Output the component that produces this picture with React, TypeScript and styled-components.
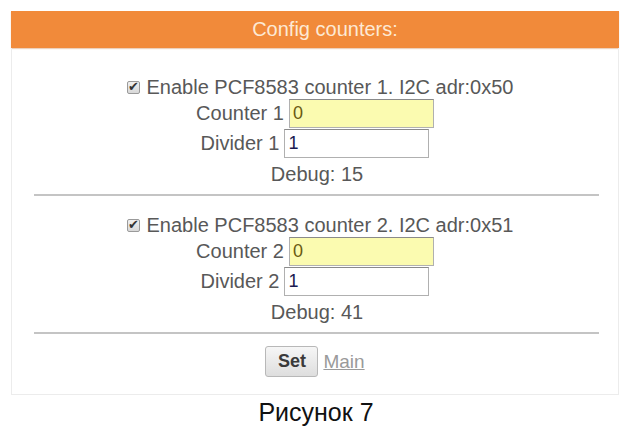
import React from "react";
import styled, { createGlobalStyle } from "styled-components";

const Global = createGlobalStyle`
  html, body { margin: 0; padding: 0; background: #ffffff; }
  body { font-family: "Liberation Sans", Arial, sans-serif; }
`;

const Page = styled.div`
  padding: 11px 20px 0 11px;
  width: 608px;
`;

const Header = styled.div`
  height: 37px;
  background: #f18a3a;
  color: #fde9d4;
  font-size: 20px;
  display: flex;
  align-items: center;
  justify-content: center;
  padding-left: 20px;
  box-shadow: 0 1px 1px rgba(200, 120, 60, 0.35);
`;

const Panel = styled.div`
  border: 1px solid #ececec;
  border-top: none;
  padding: 27px 0 17px;
  display: flex;
  flex-direction: column;
  align-items: center;
`;

const Block = styled.div<{ $first?: boolean }>`
  display: flex;
  flex-direction: column;
  align-items: center;
  width: 100%;
  padding-top: ${(p) => (p.$first ? 0 : 17)}px;
`;

const EnableLine = styled.label`
  display: flex;
  align-items: center;
  height: 24px;
  font-size: 20px;
  color: #585858;
  padding-left: 10px;
`;

const Check = styled.input`
  appearance: none;
  width: 13px;
  height: 13px;
  margin: 0 7px 0 0;
  border: 1px solid #9a9a9a;
  border-radius: 2px;
  background: linear-gradient(#f0f0f0, #d8d8d8);
  position: relative;
  &:checked::after {
    content: "✔";
    position: absolute;
    left: 0px;
    top: -3px;
    font-size: 13px;
    color: #333;
  }
`;

const FieldRow = styled.div<{ $gap?: number }>`
  display: flex;
  align-items: center;
  gap: 5px;
  margin-top: ${(p) => p.$gap ?? 0}px;
`;

const FieldLabel = styled.span`
  font-size: 20px;
  color: #585858;
`;

const Field = styled.input<{ $hl?: boolean }>`
  width: 145px;
  height: 29px;
  box-sizing: border-box;
  border: 1px solid #b0b0b0;
  border-top-color: #8a8a8a;
  background: ${(p) => (p.$hl ? "#fbfbb0" : "#ffffff")};
  color: ${(p) => (p.$hl ? "#6a5a10" : "#1a1a50")};
  font-family: "Liberation Sans", Arial, sans-serif;
  font-size: 18px;
  padding: 0 3px;
  outline: none;
`;

const Debug = styled.div`
  height: 24px;
  line-height: 24px;
  margin-top: 4px;
  font-size: 20px;
  color: #585858;
  padding-left: 4px;
`;

const Rule = styled.hr`
  align-self: stretch;
  margin: 8px 19px 0 22px;
  border: none;
  height: 2px;
  background: #c4c4c4;
`;

const Actions = styled.div`
  display: flex;
  align-items: center;
  gap: 5px;
  margin-top: 12px;
`;

const SetButton = styled.button`
  width: 53px;
  height: 31px;
  border: 1px solid #b8b8b8;
  border-radius: 3px;
  background: linear-gradient(#f6f6f6, #dedede);
  font-family: "Liberation Sans", Arial, sans-serif;
  font-weight: bold;
  font-size: 18px;
  color: #3a3a3a;
  padding: 0;
`;

const MainLink = styled.a`
  font-size: 19px;
  color: #9a9a9a;
  text-decoration: underline;
`;

const Caption = styled.div`
  text-align: center;
  font-size: 25px;
  color: #111;
  margin-top: 3px;
  padding-left: 2px;
`;

const counters = [
  { n: 1, adr: "0x50", counter: "0", divider: "1", debug: 15 },
  { n: 2, adr: "0x51", counter: "0", divider: "1", debug: 41 },
];

export default function App() {
  return (
    <>
      <Global />
      <Page>
        <Header>Config counters:</Header>
        <Panel>
          {counters.map((c, i) => (
            <Block key={c.n} $first={i === 0}>
              <EnableLine>
                <Check type="checkbox" defaultChecked />
                Enable PCF8583 counter {c.n}. I2C adr:{c.adr}
              </EnableLine>
              <FieldRow>
                <FieldLabel>Counter {c.n}</FieldLabel>
                <Field $hl defaultValue={c.counter} />
              </FieldRow>
              <FieldRow $gap={1}>
                <FieldLabel>Divider {c.n}</FieldLabel>
                <Field defaultValue={c.divider} />
              </FieldRow>
              <Debug>Debug: {c.debug}</Debug>
              <Rule />
            </Block>
          ))}
          <Actions>
            <SetButton>Set</SetButton>
            <MainLink href="#">Main</MainLink>
          </Actions>
        </Panel>
        <Caption>Рисунок 7</Caption>
      </Page>
    </>
  );
}
